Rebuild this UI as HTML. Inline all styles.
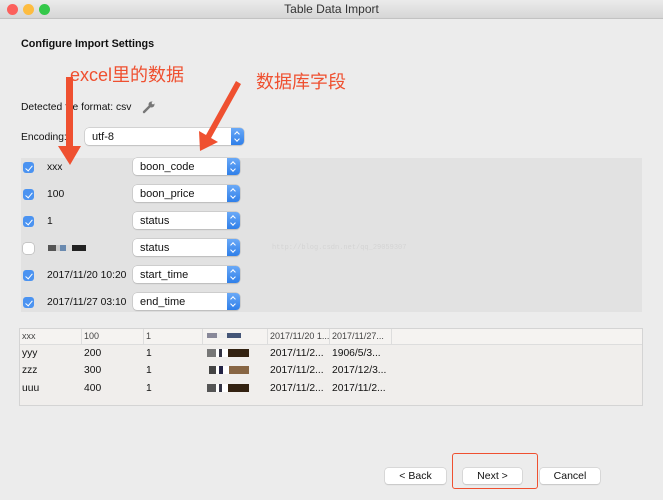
<!DOCTYPE html>
<html><head><meta charset="utf-8"><style>
*{box-sizing:border-box;margin:0;padding:0}
body{width:663px;height:500px;background:#ececec;font-family:"Liberation Sans","Noto Sans CJK SC",sans-serif;font-size:10.3px;color:#111;position:relative;overflow:hidden}
.a{position:absolute;white-space:nowrap}
.title{left:0;top:0;width:663px;height:19px;background:linear-gradient(#ebebeb,#d6d6d6);border-bottom:1px solid #c2c2c2;text-align:center;line-height:18px;font-size:12px;color:#333}
.dot{position:absolute;top:4px;width:11px;height:11px;border-radius:50%}
.sel{position:absolute;height:17px;background:#fff;border-radius:4px;box-shadow:0 0 0 .5px #b8b8b8,0 1px 1px rgba(0,0,0,.15);font-size:11px;line-height:18px;padding-left:7px}
.sel .st{position:absolute;right:0;top:0;width:13px;height:17px;background:linear-gradient(#6aa9f7,#2f7fe9);border-radius:0 4px 4px 0}
.sel .st:before{content:"";position:absolute;left:4px;top:4px;width:3px;height:3px;border-left:1.2px solid #fff;border-top:1.2px solid #fff;transform:rotate(45deg)}
.sel .st:after{content:"";position:absolute;left:4px;top:9px;width:3px;height:3px;border-right:1.2px solid #fff;border-bottom:1.2px solid #fff;transform:rotate(45deg)}
.cb{position:absolute;left:23px;width:11px;height:11px;border-radius:3px;background:#4b93f1}
.cb:after{content:"";position:absolute;left:3.5px;top:1.5px;width:3px;height:6px;border-right:1.5px solid #fff;border-bottom:1.5px solid #fff;transform:rotate(40deg)}
.cb.off{background:#fff;box-shadow:0 0 0 .5px #aaa}.cb.off:after{display:none}
.btn{position:absolute;top:468px;height:16px;background:#fff;border-radius:3px;box-shadow:0 0 0 .5px #c4c4c4,0 1px 1px rgba(0,0,0,.15);text-align:center;line-height:16px;font-size:10.5px}
.red{color:#ef5030;font-size:18px}
</style></head><body>
<div class="a title">Table Data Import</div>
<div class="dot" style="left:7px;background:#fc605c"></div>
<div class="dot" style="left:23px;background:#fdbc40"></div>
<div class="dot" style="left:39px;background:#34c84a"></div>

<div class="a" style="left:21px;top:38px;font-weight:bold;font-size:10.8px">Configure Import Settings</div>
<div class="a red" style="left:70px;top:61px">excel里的数据</div>
<div class="a red" style="left:256px;top:68px">数据库字段</div>
<div class="a" style="left:21px;top:102px">Detected file format: csv</div>
<svg class="a" style="left:142px;top:100px" width="14" height="14" viewBox="0 0 14 14"><path d="M2 12 L8 6" stroke="#777" stroke-width="2.4" stroke-linecap="round"/><circle cx="9.5" cy="4.5" r="3" fill="#777"/><circle cx="11" cy="3" r="1.3" fill="#ececec"/></svg>
<div class="a" style="left:21px;top:132px">Encoding:</div>
<div class="sel" style="left:85px;top:128px;width:159px">utf-8<div class="st"></div></div>

<div class="a" style="left:21px;top:158px;width:621px;height:154px;background:#e2e2e2"></div>
<div class="a" style="left:272px;top:244px;font-size:7px;color:#d4d4d4;font-family:'Liberation Mono',monospace">http://blog.csdn.net/qq_29059307</div>

<div class="cb" style="top:162px"></div><div class="a" style="left:47px;top:162px">xxx</div><div class="sel" style="left:133px;top:158px;width:107px">boon_code<div class="st"></div></div>
<div class="cb" style="top:189px"></div><div class="a" style="left:47px;top:189px">100</div><div class="sel" style="left:133px;top:185px;width:107px">boon_price<div class="st"></div></div>
<div class="cb" style="top:216px"></div><div class="a" style="left:47px;top:216px">1</div><div class="sel" style="left:133px;top:212px;width:107px">status<div class="st"></div></div>
<div class="cb off" style="top:243px"></div>
<div class="a" style="left:48px;top:245px;width:38px;height:6px;background:linear-gradient(90deg,#555 0 8px,#ccc 8px 12px,#6a8ab0 12px 18px,#ddd 18px 24px,#222 24px 38px)"></div>
<div class="sel" style="left:133px;top:239px;width:107px">status<div class="st"></div></div>
<div class="cb" style="top:270px"></div><div class="a" style="left:47px;top:270px">2017/11/20 10:20</div><div class="sel" style="left:133px;top:266px;width:107px">start_time<div class="st"></div></div>
<div class="cb" style="top:297px"></div><div class="a" style="left:47px;top:297px">2017/11/27 03:10</div><div class="sel" style="left:133px;top:293px;width:107px">end_time<div class="st"></div></div>

<div class="a" style="left:19px;top:328px;width:624px;height:78px;background:#f0eeec;border:1px solid #d4d4d4"></div>
<div class="a" style="left:20px;top:329px;width:622px;height:16px;background:#f5f3f1;border-bottom:1px solid #ddd"></div>
<div class="a" style="left:81px;top:329px;width:1px;height:16px;background:#ddd"></div>
<div class="a" style="left:143px;top:329px;width:1px;height:16px;background:#ddd"></div>
<div class="a" style="left:202px;top:329px;width:1px;height:16px;background:#ddd"></div>
<div class="a" style="left:267px;top:329px;width:1px;height:16px;background:#ddd"></div>
<div class="a" style="left:329px;top:329px;width:1px;height:16px;background:#ddd"></div>
<div class="a" style="left:391px;top:329px;width:1px;height:16px;background:#ddd"></div>
<div class="a" style="top:331px;left:22px;font-size:9px;color:#444">xxx</div>
<div class="a" style="top:331px;left:84px;font-size:9px;color:#444">100</div>
<div class="a" style="top:331px;left:146px;font-size:9px;color:#444">1</div>
<div class="a" style="top:333px;left:207px;width:34px;height:5px;background:linear-gradient(90deg,#889 0 10px,#eee 10px 20px,#457 20px 34px)"></div>
<div class="a" style="top:331px;left:270px;font-size:9px;color:#444">2017/11/20 1...</div>
<div class="a" style="top:331px;left:332px;font-size:9px;color:#444">2017/11/27...</div>

<div class="a" style="top:348px;left:22px">yyy</div><div class="a" style="top:348px;left:84px">200</div><div class="a" style="top:348px;left:146px">1</div><div class="a" style="top:349px;left:207px;width:42px;height:8px;background:linear-gradient(90deg,#777 0 9px,#fff 9px 12px,#334 12px 15px,#fff 15px 21px,#321 21px 42px)"></div><div class="a" style="top:348px;left:270px">2017/11/2...</div><div class="a" style="top:348px;left:332px">1906/5/3...</div>
<div class="a" style="top:365px;left:22px">zzz</div><div class="a" style="top:365px;left:84px">300</div><div class="a" style="top:365px;left:146px">1</div><div class="a" style="top:366px;left:209px;width:40px;height:8px;background:linear-gradient(90deg,#444 0 7px,#fff 7px 10px,#224 10px 14px,#fff 14px 20px,#864 20px 40px)"></div><div class="a" style="top:365px;left:270px">2017/11/2...</div><div class="a" style="top:365px;left:332px">2017/12/3...</div>
<div class="a" style="top:383px;left:22px">uuu</div><div class="a" style="top:383px;left:84px">400</div><div class="a" style="top:383px;left:146px">1</div><div class="a" style="top:384px;left:207px;width:42px;height:8px;background:linear-gradient(90deg,#555 0 9px,#fff 9px 12px,#334 12px 15px,#fff 15px 21px,#321 21px 42px)"></div><div class="a" style="top:383px;left:270px">2017/11/2...</div><div class="a" style="top:383px;left:332px">2017/11/2...</div>

<div class="btn" style="left:385px;width:61px">&lt; Back</div>
<div class="btn" style="left:463px;width:59px">Next &gt;</div>
<div class="btn" style="left:540px;width:60px">Cancel</div>
<div class="a" style="left:452px;top:453px;width:86px;height:36px;border:1.5px solid #ef5030;border-radius:3px"></div>

<svg class="a" style="left:0;top:0" width="663" height="500">
<path d="M66 77 L73 77 L73 146 L81 146 L70 165 L58 146 L66 146 Z" fill="#ef5030"/>
<path d="M236 81 L241 84 L211 138 L218 142 L200 151 L199 131 L206 135 Z" fill="#ef5030"/>
</svg>
</body></html>
